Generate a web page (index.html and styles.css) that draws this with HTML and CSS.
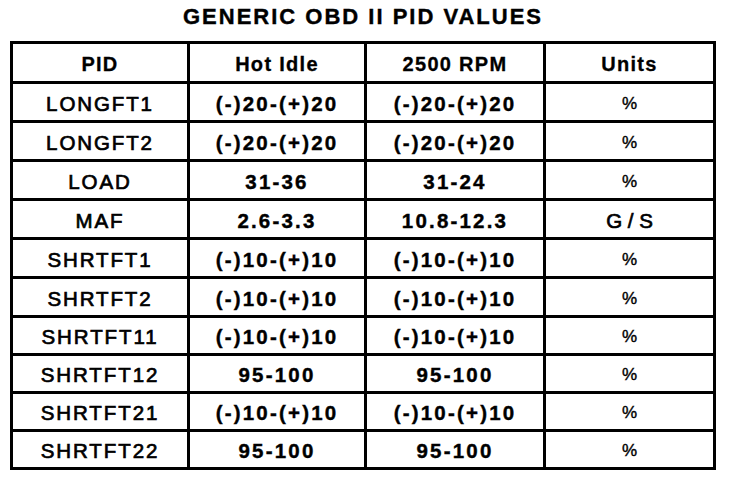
FILE: index.html
```html
<!DOCTYPE html>
<html lang="en">
<head>
<meta charset="utf-8">
<title>Generic OBD II PID Values</title>
<link rel="stylesheet" href="styles.css">
</head>
<body>
<main class="page">
  <h1 class="title">GENERIC OBD II PID VALUES</h1>
  <div class="grid" role="table">
    <div class="cell head" role="columnheader">PID</div>
    <div class="cell head" role="columnheader">Hot Idle</div>
    <div class="cell head" role="columnheader">2500 RPM</div>
    <div class="cell head" role="columnheader">Units</div>

    <div class="cell pid">LONGFT1</div><div class="cell val">(-)20-(+)20</div><div class="cell val">(-)20-(+)20</div><div class="cell unit pct">%</div>
    <div class="cell pid">LONGFT2</div><div class="cell val">(-)20-(+)20</div><div class="cell val">(-)20-(+)20</div><div class="cell unit pct">%</div>
    <div class="cell pid">LOAD</div><div class="cell val">31-36</div><div class="cell val">31-24</div><div class="cell unit pct">%</div>
    <div class="cell pid">MAF</div><div class="cell val">2.6-3.3</div><div class="cell val">10.8-12.3</div><div class="cell unit">G / S</div>
    <div class="cell pid">SHRTFT1</div><div class="cell val">(-)10-(+)10</div><div class="cell val">(-)10-(+)10</div><div class="cell unit pct">%</div>
    <div class="cell pid">SHRTFT2</div><div class="cell val">(-)10-(+)10</div><div class="cell val">(-)10-(+)10</div><div class="cell unit pct">%</div>
    <div class="cell pid">SHRTFT11</div><div class="cell val">(-)10-(+)10</div><div class="cell val">(-)10-(+)10</div><div class="cell unit pct">%</div>
    <div class="cell pid">SHRTFT12</div><div class="cell val">95-100</div><div class="cell val">95-100</div><div class="cell unit pct">%</div>
    <div class="cell pid">SHRTFT21</div><div class="cell val">(-)10-(+)10</div><div class="cell val">(-)10-(+)10</div><div class="cell unit pct">%</div>
    <div class="cell pid">SHRTFT22</div><div class="cell val">95-100</div><div class="cell val">95-100</div><div class="cell unit pct">%</div>
  </div>
</main>
</body>
</html>
```

FILE: styles.css
```css
html, body {
  margin: 0;
  padding: 0;
  background: #fff;
  color: #000;
  font-family: "Liberation Sans", Arial, sans-serif;
}

.page {
  padding: 6px 0 0 10px;
}

.title {
  width: 706px;
  margin: 0 0 13px 0;
  font-size: 22px;
  line-height: 22px;
  font-weight: 700;
  letter-spacing: 2px;
  text-align: center;
  -webkit-text-stroke: 0.4px #000;
}

.grid {
  display: grid;
  width: 706px;
  box-sizing: border-box;
  grid-template-columns: 177px 177px 179px 170px;
  grid-template-rows: 40px repeat(6, 39px) repeat(4, 38px);
  border-top: 3px solid #000;
  border-left: 3px solid #000;
}

.cell {
  box-sizing: border-box;
  display: flex;
  align-items: center;
  justify-content: center;
  padding-top: 3px;
  border-right: 3px solid #000;
  border-bottom: 3px solid #000;
  white-space: nowrap;
}

.head {
  font-size: 20px;
  font-weight: 700;
  letter-spacing: 1.3px;
  -webkit-text-stroke: 0.3px #000;
}

.pid {
  font-size: 20.5px;
  font-weight: 400;
  letter-spacing: 1.9px;
  -webkit-text-stroke: 0.7px #000;
}

.val {
  font-size: 20.5px;
  font-weight: 700;
  letter-spacing: 2.2px;
  -webkit-text-stroke: 0.4px #000;
}

.unit {
  font-size: 20.5px;
  font-weight: 400;
  letter-spacing: 0;
  -webkit-text-stroke: 0.7px #000;
}

.pct {
  font-size: 17px;
  -webkit-text-stroke: 0.4px #000;
}
```
